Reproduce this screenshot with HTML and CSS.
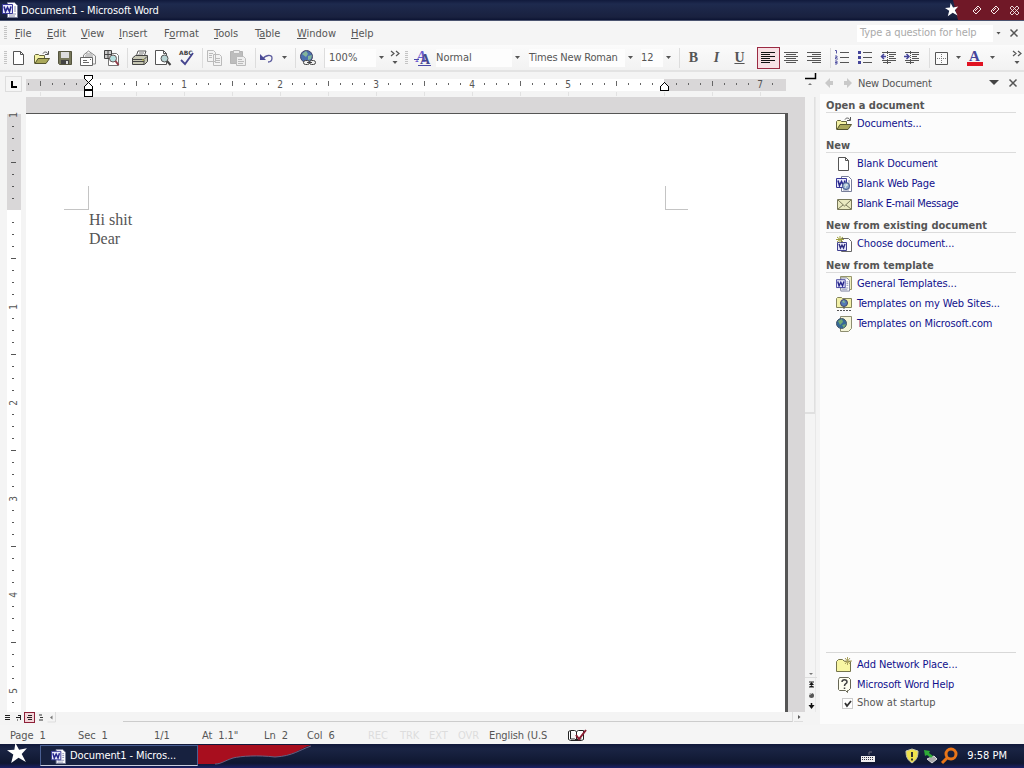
FILE: index.html
```html
<!DOCTYPE html>
<html lang="en">

	<head>
		<meta charset="UTF-8">
		<title>Document1 - Microsoft Word</title>
		<link rel="stylesheet" href="styles.css">
	</head>

	<body>
		<!-- shared icons -->
		<svg class="defs" width="0" height="0">
			<symbol id="word" viewBox="0 0 16 16">
				<path d="M5.500 .500h7l3 3v12h-10z" fill="#fff" stroke="#777d98" />
				<path d="M12 5h2M12 7h2M12 9h2M7 12h7M7 14h6" stroke="#8a8fb0" />
				<path d="M.500 2.500h10v9h-10z" fill="#e8e8fa" stroke="#37379a" />
				<path d="M2 4.500l1.500 5L5.500 5.500l2 4L9 4.500" fill="none" stroke="#26268c" stroke-width="1.600" />
			</symbol>
			<symbol id="blank" viewBox="0 0 16 16">
				<path d="M2.500 1.500h7l3 3v10h-10z" fill="#fff" stroke="#555" />
				<path d="M9.500 1.500v3h3" fill="none" stroke="#555" />
			</symbol>
			<symbol id="open" viewBox="0 0 16 16">
				<path d="M.500 13.500v-8l1-1h3l1 1h5v3" fill="#f4f2a5" stroke="#66663c" />
				<path d="M1 13.500l3-5h11.500l-3.500 5z" fill="#aaa85a" stroke="#55552f" />
				<path d="M9 3.500c1-2 4-2 5 .500M14.500 1v3.500H11" fill="none" stroke="#555" />
			</symbol>
			<symbol id="star" viewBox="0 0 20 20">
				<path d="M8 0l3.500 6.500L19 5l-5 5.500L18 18l-7-4-7 5 2-8-6-4 7-.500z" fill="#fff" />
			</symbol>
			<symbol id="close" viewBox="0 0 10 10">
				<path d="M1.500 1.500l7 7M8.500 1.500l-7 7" stroke="#555" stroke-width="1.500" />
			</symbol>
			<symbol id="more" viewBox="0 0 10 16">
				<path d="M1 1l3 2.500L1 6M6 1l3 2.500L6 6" fill="none" stroke="#555" stroke-width="1.200" />
				<path d="M2.500 11h5l-2.500 3z" fill="#555" />
			</symbol>
		</svg>

		<div class="title">
			<svg class="app" width="16" height="16"><use href="#word" /></svg>
			<span>Document1 - Microsoft Word</span>
			<div class="corner">
				<svg width="80" height="20">
					<path d="M9 0h71v20H14z" fill="#701827" />
					<use href="#star" x="1" y="3" width="14" height="14" />
					<g fill="none" stroke="#f5e8e8">
						<path d="M29 11l5-5 3 3-5 5zM31 11l3-3M47 11l5-5 3 3-5 5zM49 11l3-3" />
						<path d="M66 8l2-2 7 7-2 2zM73 6l2 2-7 7-2-2z" stroke-width=".900" />
					</g>
				</svg>
			</div>
		</div>

		<div class="menu">
			<i class="grip"></i>
			<ul>
				<li><u>F</u>ile</li>
				<li><u>E</u>dit</li>
				<li><u>V</u>iew</li>
				<li><u>I</u>nsert</li>
				<li>F<u>o</u>rmat</li>
				<li><u>T</u>ools</li>
				<li>T<u>a</u>ble</li>
				<li><u>W</u>indow</li>
				<li><u>H</u>elp</li>
			</ul>
			<div class="ask">Type a question for help</div>
			<i class="arrow"></i>
			<svg class="menu-close" width="10" height="10"><use href="#close" /></svg>
		</div>

		<div class="tools">
			<i class="grip"></i>
			<div class="standard">
				<svg class="btn" viewBox="0 0 23 22"><use href="#blank" x="4" y="3" width="16" height="16" /></svg>
				<svg class="btn" viewBox="0 0 23 22"><use href="#open" x="4" y="3" width="16" height="16" /></svg>
				<svg class="btn" viewBox="0 0 23 22">
					<path d="M5.500 4.500h13v13h-12l-1-1z" fill="#77775a" stroke="#55553f" />
					<path d="M8 5h8v6H8z" fill="#ddd" />
					<path d="M8 13h8v4H8z" fill="#444" />
					<path d="M13 14h2v3h-2z" fill="#ddd" />
				</svg>
				<svg class="btn" viewBox="0 0 23 22">
					<path d="M7.500 10V8l5-4 7 5v8h-3" fill="#f5f5f5" stroke="#888" />
					<path d="M9 9h8M10 7h6" stroke="#999" />
					<path d="M4.500 10.500h12v8h-12z" fill="#fff" stroke="#666" />
					<path d="M7 13.500h4M7 15.500h6M14 12.500h1" stroke="#666" />
				</svg>
				<svg class="btn" viewBox="0 0 23 22">
					<path d="M9.500 6.500h8l2 2v10h-10z" fill="#fff" stroke="#777" />
					<path d="M5.500 3.500h7v8h-7zM5 7.500h8M9 3v9" fill="#ccc" stroke="#444" />
					<circle cx="14" cy="11.500" r="3.500" fill="#b4dfdf" stroke="#655" />
					<path d="M16.500 14l3 4" stroke="#923c48" stroke-width="2" />
				</svg>
				<i class="sep"></i>
				<svg class="btn" viewBox="0 0 23 22">
					<path d="M8 10l2-6h8l-2 6z" fill="#fff" stroke="#555" />
					<path d="M11 6h5M10 8h5" stroke="#777" />
					<path d="M4.500 11l3-2.500h12v6l-3 3h-12z" fill="#c7c7b4" stroke="#444" />
					<path d="M4 12.500h12l3-3M5 14.500h11M16 13v4" fill="none" stroke="#444" />
					<path d="M14 13h2" stroke="#b7b738" />
				</svg>
				<svg class="btn" viewBox="0 0 23 22">
					<path d="M4.500 3.500h8l3 3v11h-11z" fill="#fff" stroke="#555" />
					<path d="M12.500 3.500v3h3" fill="none" stroke="#555" />
					<circle cx="13.500" cy="11.500" r="3.500" fill="#b9d4d4" stroke="#555" />
					<path d="M16 14l3.500 4" stroke="#444" stroke-width="2" />
				</svg>
				<svg class="btn" viewBox="0 0 23 22">
					<text class="abc" x="5" y="8">ABC</text>
					<path d="M7 13l4 4 8-11" fill="none" stroke="#45458f" stroke-width="1.800" />
				</svg>
				<i class="sep"></i>
				<svg class="btn" viewBox="0 0 23 22">
					<path d="M4.500 3.500h6l2 2v9h-8zM10.500 7.500h6l2 2v9h-8z" fill="#f3f3f3" stroke="#bbb" />
					<path d="M6 6.500h4M6 8.500h3M6 10.500h3M12 11.500h5M12 13.500h5M12 15.500h5" stroke="#bbb" />
				</svg>
				<svg class="btn" viewBox="0 0 23 22">
					<path d="M4.500 4.500h12v12h-12z" fill="#bdbdbd" stroke="#b4b4b4" />
					<path d="M7.500 3.500h6v3h-6z" fill="#eee" stroke="#bbb" />
					<path d="M10.500 9.500h7l2 2v7h-9zM12 12.500h4M12 14.500h6M12 16.500h5" fill="#eee" stroke="#bbb" />
				</svg>
				<i class="sep wide"></i>
				<svg class="btn" viewBox="0 0 23 22">
					<path d="M7 12c2-4 9-5 9-1 0 2-1 4-4 4" fill="none" stroke="#5a5a9c" stroke-width="1.300" />
					<path d="M4 7v6h6z" fill="#494995" />
				</svg>
				<i class="arrow"></i>
				<i class="sep"></i>
				<svg class="btn" viewBox="0 0 23 22">
					<circle cx="10.500" cy="9.500" r="6" fill="#4a6fae" stroke="#446" />
					<path d="M6 7l4-3 2 3-2 3zM12 9l4-1-1 4-3 1z" fill="#83b59a" />
					<rect x="7.500" y="13.500" width="6" height="4" rx="2" fill="#eee" stroke="#444" />
					<rect x="13.500" y="13.500" width="6" height="4" rx="2" fill="#eee" stroke="#444" />
					<path d="M11 15.500h5" stroke="#444" />
				</svg>
				<i class="sep"></i>
			</div>
			<div class="combo zoom">100%</div><i class="arrow"></i>
			<svg class="more" width="10" height="16"><use href="#more" /></svg>
			<i class="grip"></i>
			<svg class="btn styles" viewBox="0 0 23 22">
				<text class="back-a" x="5" y="15">A</text>
				<text class="front-a" x="9" y="17">A</text>
				<path d="M3 12.500h5M7 18.500h13" stroke="#4a4aa8" />
			</svg>
			<div class="combo style">Normal</div><i class="arrow"></i>
			<div class="combo face">Times New Roman</div><i class="arrow"></i>
			<div class="combo size">12</div><i class="arrow"></i>
			<i class="sep"></i>
			<div class="format">
				<b class="letter">B</b>
				<b class="letter it">I</b>
				<b class="letter un">U</b>
			</div>
			<svg class="btn on" viewBox="0 0 23 22"><path d="M4 5.500h14M4 7.500h9M4 9.500h14M4 11.500h9M4 13.500h14M4 15.500h9" stroke="#111" /></svg>
			<svg class="btn" viewBox="0 0 23 22"><path d="M4 5.500h14M6 7.500h10M4 9.500h14M6 11.500h10M4 13.500h14M6 15.500h10" stroke="#555" /></svg>
			<svg class="btn" viewBox="0 0 23 22"><path d="M4 5.500h14M9 7.500h9M4 9.500h14M9 11.500h9M4 13.500h14M9 15.500h9" stroke="#555" /></svg>
			<i class="sep list-sep"></i>
			<svg class="btn" viewBox="0 0 23 22">
				<path d="M9 5.500h9M9 10.500h9M9 15.500h9" stroke="#555" />
				<path d="M4 3.500h1.500v3M4 9h2v1.500H4.500V12H7M4 14h2v3H4M4 15.500h2" fill="none" stroke="#5757a5" />
			</svg>
			<svg class="btn" viewBox="0 0 23 22">
				<path d="M9 5.500h9M9 10.500h9M9 15.500h9" stroke="#555" />
				<path d="M4 4h3v3H4zM4 9h3v3H4zM4 14h3v3H4z" fill="#45459b" />
			</svg>
			<svg class="btn" viewBox="0 0 23 22">
				<path d="M5 5.500h14M12 7.500h7M12 9.500h5M12 11.500h7M5 13.500h14M6 15.500h8" stroke="#555" />
				<path d="M10.500 4v14" stroke="#555" stroke-dasharray="1 1" />
				<path d="M4 9.500h5M7 7l-2.500 2.500L7 12" fill="none" stroke="#45459b" stroke-width="1.500" />
			</svg>
			<svg class="btn" viewBox="0 0 23 22">
				<path d="M5 5.500h14M12 7.500h7M12 9.500h5M12 11.500h7M5 13.500h14M6 15.500h8" stroke="#555" />
				<path d="M10.500 4v14" stroke="#555" stroke-dasharray="1 1" />
				<path d="M4 9.500h5M6.500 7L9 9.500 6.500 12" fill="none" stroke="#45459b" stroke-width="1.500" />
			</svg>
			<i class="sep wide"></i>
			<svg class="btn" viewBox="0 0 23 22">
				<path d="M5.500 5.500h12v12h-12z" fill="#fbfbfb" stroke="#555" />
				<path d="M11.500 7v10M7 11.500h10" stroke="#777" stroke-dasharray="1 1" />
			</svg>
			<i class="arrow"></i>
			<svg class="btn" viewBox="0 0 23 22">
				<text class="fontcolor" x="5" y="14">A</text>
				<path d="M3 15h16v4H3z" fill="#e01222" />
			</svg>
			<i class="arrow"></i>
			<svg class="more last" width="10" height="16"><use href="#more" /></svg>
		</div>

		<div class="main">
			<div class="editor">
				<svg class="hruler" width="820" height="25">
					<defs>
						<pattern id="inch" x="88" y="0" width="96" height="25" patternUnits="userSpaceOnUse">
							<path d="M12.500 11v2M24.500 11v2M36.500 11v2M48.500 9v5M60.500 11v2M72.500 11v2M84.500 11v2" stroke="#666" />
							<path d="M48.500 20v4M.500 20v4" stroke="#e2e2e2" />
						</pattern>
					</defs>
					<rect x="5.500" y="4.500" width="16" height="15" fill="#f5f5f5" stroke="#ddd" />
					<path d="M12 9v6h5" fill="none" stroke="#000" stroke-width="2" />
					<path d="M26 7h62v12H26zM664 7h122v12H664z" fill="#d9d7d8" />
					<path d="M88 7h576v12H88z" fill="#fff" />
					<path d="M26 0h751v25H26z" fill="url(#inch)" />
					<g class="num">
						<text x="184" y="16">1</text>
						<text x="280" y="16">2</text>
						<text x="376" y="16">3</text>
						<text x="472" y="16">4</text>
						<text x="568" y="16">5</text>
						<text x="760" y="16">7</text>
					</g>
					<g fill="#fff" stroke="#000" shape-rendering="crispEdges">
						<path d="M84.500 3.500h8v3l-4 4-4-4zM88.500 10.500l4 4v3h-8v-3zM84.500 18.500h8v6h-8z" />
						<path d="M664.500 10.500l4 4v4h-8v-4z" />
					</g>
					<path d="M805 6.500h10.500V1" fill="none" stroke="#000" stroke-width="1.500" />
					<path d="M808 13h4l-2-2z" fill="#777" />
				</svg>
				<div class="work">
					<svg class="vruler" width="26" height="615">
						<defs>
							<pattern id="vinch" x="0" y="113" width="26" height="96" patternUnits="userSpaceOnUse">
								<path d="M12 12.500h2M12 24.500h2M12 36.500h2M11 48.500h5M12 60.500h2M12 72.500h2M12 84.500h2" stroke="#555" />
							</pattern>
						</defs>
						<path d="M7 17h14v96H7z" fill="#d9d7d8" />
						<path d="M7 113h14v502H7z" fill="#fff" />
						<path d="M0 19h26v596H0z" fill="url(#vinch)" />
						<g class="num">
							<text transform="translate(17 18) rotate(-90)">1</text>
							<text transform="translate(17 210) rotate(-90)">1</text>
							<text transform="translate(17 306) rotate(-90)">2</text>
							<text transform="translate(17 402) rotate(-90)">3</text>
							<text transform="translate(17 498) rotate(-90)">4</text>
							<text transform="translate(17 594) rotate(-90)">5</text>
						</g>
					</svg>
					<div class="desk">
						<div class="page">
							<div class="marks"><i class="left"></i><i class="right"></i></div>
							<p>Hi shit</p>
							<p>Dear</p>
						</div>
					</div>
					<div class="vscroll">
						<div class="thumb"></div>
						<svg width="12" height="40" viewBox="0 0 12 40">
							<path d="M4 1h4L6 3z" fill="#777" />
							<path d="M0 5.500h12" stroke="#ddd" />
							<path d="M4 10h5M4 15h5" stroke="#222" />
							<path d="M4 13l2.500-3L9 13zM4.500 15l2-2 2 2z" fill="#111" />
							<circle cx="6.500" cy="23.500" r="2.500" fill="#555" />
							<path d="M4 23l3-2" stroke="#ddd" />
							<path d="M6.500 31v4" stroke="#111" stroke-width="1.500" />
							<path d="M3.500 33h6l-3 4z" fill="#111" />
						</svg>
					</div>
				</div>
				<div class="hscroll">
					<svg width="62" height="13" viewBox="0 0 62 13">
						<path d="M5 3.500h5M5 5.500h5M5 7.500h5" stroke="#222" />
						<path d="M16 5.500h5M20.500 3v5M18 3.500h2M17 8h1" stroke="#222" />
						<rect x="24.500" y=".500" width="10" height="10" fill="#f3d5d9" stroke="#8d2038" />
						<path d="M28 3.500h4M27 5.500h5M28 7.500h4" stroke="#222" />
						<path d="M39 3h3M40 5.500h3M39 8h4" stroke="#333" />
						<path d="M50 5.500l2.500-2v4z" fill="#777" />
						<path d="M55.500 0v10h-8" fill="none" stroke="#ddd" />
					</svg>
					<div class="track"></div>
					<svg width="12" height="10"><path d="M5 3v4l2.500-2z" fill="#555" /><path d="M1 9.500h9" stroke="#ddd" /></svg>
				</div>
			</div>

			<div class="pane">
				<div class="pane-head">
					<svg width="30" height="12"><path d="M1 6l5-5v3h3v4H6v3zM28 6l-5-5v3h-3v4h3v3z" fill="#c9c9c9" /></svg>
					<span>New Document</span>
					<svg width="30" height="10">
						<path d="M1 2h10L6 7z" fill="#444" />
						<use href="#close" x="20" y="0" width="10" height="10" />
					</svg>
				</div>
				<h2>Open a document</h2>
				<a><svg viewBox="0 0 16 16"><use href="#open" /></svg>Documents...</a>
				<h2>New</h2>
				<a><svg viewBox="0 0 16 16"><use href="#blank" /></svg>Blank Document</a>
				<a><svg viewBox="0 0 16 16"><use href="#word" /><circle cx="10" cy="10" r="3.500" fill="#92add0" stroke="#445a8c" /><path d="M8 9h4M9 12l2-4" stroke="#e5f0e5" /></svg>Blank Web Page</a>
				<a class="mail"><svg viewBox="0 0 16 16"><path d="M1.500 3.500h14v10h-14z" fill="#e9e9c0" stroke="#777759" /><path d="M2 4l6.500 6L15 4M2 13l5-4M15 13l-5-4" fill="none" stroke="#777759" /></svg>Blank E-mail Message</a>
				<h2>New from existing document</h2>
				<a><svg viewBox="0 0 16 16"><path d="M5.500 2.500h7l3 3v10h-10z" fill="#fff" stroke="#666" /><path d="M1.500 6.500h9v8h-9z" fill="#e7e7f8" stroke="#404090" /><path d="M3 8l1.500 4L6 9l1.500 3L9 8" fill="none" stroke="#303080" stroke-width="1.400" /><path d="M4 0v7M0 3.500h8M1 1l6 5M7 1L1 6" stroke="#a0a03c" /></svg>Choose document...</a>
				<h2>New from template</h2>
				<a><svg viewBox="0 0 16 16"><path d="M4.500 .500h11v13h-11z" fill="#efefc0" stroke="#96966a" /><use href="#word" y="1" width="14" height="15" /></svg>General Templates...</a>
				<a><svg viewBox="0 0 16 16"><path d="M.500 2.500l1-1h4l1 1h9v9H.500z" fill="#f2f0a8" stroke="#85855b" /><circle cx="8" cy="7" r="3.500" fill="#557bb6" stroke="#446" /><path d="M6 6l2-2 1 3z" fill="#8fc08a" /><path d="M8 11v4M1 14.500h14" stroke="#555" stroke-dasharray="2 1" /></svg>Templates on my Web Sites...</a>
				<a><svg viewBox="0 0 16 16"><path d="M4.500 .500h11v12l-3 3h-8z" fill="#f5f5d9" stroke="#8d8d70" /><circle cx="5.500" cy="7.500" r="5" fill="#356998" stroke="#456" /><path d="M2 5l4-2 1 3-3 3zM6 9l4-1-2 4z" fill="#74aa70" /></svg>Templates on Microsoft.com</a>
				<div class="pane-foot">
					<a><svg viewBox="0 0 16 16"><path d="M.500 14.500v-10l2-2h4l2 2h6v10z" fill="#f8f6a3" stroke="#74744b" /><path d="M11.500 0v8M8 4h8M9 1l5 6M14 1L9 7" stroke="#aaa25e" /></svg>Add Network Place...</a>
					<a><svg viewBox="0 0 16 16"><path d="M3.500 .500h9l2 2v9l-2 2h-1v2l-2-2h-6l-1-1v-10z" fill="#fffff0" stroke="#666655" /><path d="M6 5c0-3 5-3 5 0 0 2-2.500 1.500-2.500 4M8.500 10.500v1.500" fill="none" stroke="#444" stroke-width="1.500" /></svg>Microsoft Word Help</a>
					<label><i class="check"><svg width="8" height="8"><path d="M1 3l2 3 4-5" fill="none" stroke="#333" stroke-width="1.800" /></svg></i>Show at startup</label>
				</div>
			</div>
		</div>

		<div class="status">
			<span>Page&nbsp; 1</span>
			<span>Sec&nbsp; 1</span>
			<span>1/1</span>
			<span>At&nbsp; 1.1"</span>
			<span>Ln&nbsp; 2</span>
			<span>Col&nbsp; 6</span>
			<span class="off">REC</span>
			<span class="off">TRK</span>
			<span class="off">EXT</span>
			<span class="off">OVR</span>
			<span>English (U.S</span>
			<svg width="19" height="14">
				<path d="M.500 2.500l2-1h4l2 1 2-1h5v9l-2 1h-11l-2-1zM2.500 2v8h4l2 1 2-1h3M8.500 3v8" fill="#fff" stroke="#222" />
				<path d="M8 6l3 4 7-9" fill="none" stroke="#8a1f32" stroke-width="2" />
			</svg>
		</div>

		<div class="taskbar">
			<svg class="start" width="40" height="24"><use href="#star" x="7" y="-1" width="21" height="21" /></svg>
			<div class="task">
				<svg width="15" height="15"><use href="#word" /></svg>
				<span>Document1 - Micros...</span>
			</div>
			<svg class="wave" width="120" height="24">
				<path d="M0 1h113C101 5 95 12 77 13 60 11 43 12 35 14c-9 3-12 6-18 6H0z" fill="#a80e1e" />
				<path d="M113 2C101 6 95 12 77 13 60 11 43 12 35 14c-9 3-12 6-18 6" fill="none" stroke="#696080" />
			</svg>
			<div class="tray">
				<svg width="98" height="22">
					<path d="M1 11h14v6H1z" fill="#eee" />
					<path d="M2 12.500h12M2 14.500h12" stroke="#334" stroke-dasharray="1 1" />
					<path d="M9 10V7h3" fill="none" stroke="#667" />
					<path d="M52 4l6 2c0 7-2 9-6 12-4-3-6-5-6-12z" fill="#efe24c" stroke="#c8c8b0" />
					<path d="M52 7v5M52 13.500v2" stroke="#333" stroke-width="2" />
					<path d="M67 14l7-3 3 3-5 4z" fill="#aaa" stroke="#ddd" />
					<path d="M64 5l6 1-1 2 4 3-2 2-4-3-2 1z" fill="#2faa37" />
					<circle cx="91" cy="9" r="5" fill="none" stroke="#e87518" stroke-width="3" />
					<path d="M87 13l-5 5" stroke="#e87518" stroke-width="3" />
				</svg>
				<span>9:58 PM</span>
			</div>
		</div>
	</body>

</html>
```
FILE: styles.css
```css
* {
	margin: 0;
	padding: 0;
	box-sizing: border-box;
}

body {
	width: 1024px;
	height: 768px;
	overflow: hidden;
	display: flex;
	flex-direction: column;
	font: 11px/14px "DejaVu Sans Condensed", "DejaVu Sans", sans-serif;
	font-stretch: condensed;
	color: #555;
	background: #f4f4f4;
	white-space: nowrap;
}

ul {
	list-style: none;
}

svg {
	display: block;
	flex: none;
}

.defs {
	position: absolute;
}

/* title bar */
.title {
	height: 21px;
	flex: none;
	display: flex;
	align-items: center;
	color: #fff;
	letter-spacing: -.12px;
	background: linear-gradient(#111a3c, #1e2a4e 20%, #19213f 85%, #0c1433);
	border-bottom: 1px solid #4b5470;
}

.title .app {
	margin: 0 3px 0 2px;
}

.title span {
	padding-top: 2px;
}

.corner {
	margin-left: auto;
}

/* menu bar */
.menu {
	height: 24px;
	flex: none;
	display: flex;
	align-items: center;
	background: #f5f5f5;
}

.grip {
	width: 3px;
	height: 14px;
	margin-left: 4px;
	flex: none;
	background: repeating-linear-gradient(#c4c4c4 0 1px, #f5f5f5 1px 2px);
}

.menu ul {
	margin-left: 8px;
	padding-top: 2px;
	display: grid;
	grid-template-columns: 32px 34px 38px 45px 50px 41px 42px 54px 40px;
}

.ask {
	margin-left: auto;
	width: 136px;
	height: 17px;
	padding-left: 3px;
	line-height: 16px;
	letter-spacing: -.1px;
	color: #aaa;
	background: #fff;
}

.arrow {
	width: 11px;
	height: 3px;
	flex: none;
	background: #555;
	clip-path: polygon(3px 0, 8px 0, 5.5px 3px);
}

.menu-close {
	margin: 0 5px 0 5px;
}

/* toolbars */
.tools {
	height: 27px;
	flex: none;
	display: flex;
	align-items: center;
	background: linear-gradient(#fbfbfb, #f2f2f2);
	border-bottom: 2px solid #e3e3e3;
}

.standard {
	display: flex;
	align-items: center;
}

.btn {
	width: 23px;
	height: 22px;
}

.btn.on {
	background: #f7e0e4;
	outline: 1px solid #9b2a42;
	outline-offset: -1px;
}

.sep {
	width: 6px;
	height: 20px;
	flex: none;
	border-right: 1px solid #ddd;
}

.sep.wide {
	width: 7px;
}

.abc {
	font: bold 6px "DejaVu Sans", sans-serif;
	fill: #444;
}

.fontcolor {
	font: bold 15px "Liberation Serif", serif;
	fill: #45459b;
}

.back-a {
	font: italic bold 16px "Liberation Serif", serif;
	fill: #6a5cd0;
}

.front-a {
	font: bold 14px "Liberation Serif", serif;
	fill: #454a8c;
}

.combo {
	height: 18px;
	line-height: 17px;
	flex: none;
	background: #fdfdfd;
}

.zoom {
	width: 51px;
	padding-left: 4px;
}

.style {
	width: 76px;
}

.face {
	width: 96px;
	margin-left: 6px;
	letter-spacing: -.2px;
}

.size {
	width: 22px;
	margin-left: 5px;
}

.more {
	margin: 0 1px 0 3px;
}

.more.last {
	margin: 0 2px 0 auto;
}

.styles {
	margin: 0 2px 0 3px;
}

.format {
	display: flex;
	width: 77px;
	padding-left: 2px;
}

.letter {
	width: 23px;
	text-align: center;
	font: bold 14px/16px "Liberation Serif", serif;
}

.it {
	font-style: italic;
}

.un {
	text-decoration: underline;
}

.list-sep {
	width: 5px;
}

/* editor */
.main {
	flex: 1;
	min-height: 0;
	display: flex;
}

.editor {
	width: 820px;
	display: flex;
	flex-direction: column;
}

.num {
	font: 10px "DejaVu Sans Condensed", "DejaVu Sans", sans-serif;
	fill: #555;
	text-anchor: middle;
}

.work {
	height: 615px;
	display: flex;
}

.desk {
	width: 779px;
	padding-top: 16px;
	background: #d9d7d8;
}

.page {
	width: 762px;
	height: 599px;
	padding-top: 72px;
	background: #fff;
	border-top: 1px solid #555;
	border-right: 3px solid #555;
}

.marks {
	display: flex;
	justify-content: space-between;
	width: 624px;
	height: 24px;
	margin: 0 0 0 38px;
}

.marks i {
	width: 25px;
	border-bottom: 1px solid #c4c4c4;
}

.marks .left {
	border-right: 1px solid #c4c4c4;
}

.marks .right {
	width: 23px;
	border-left: 1px solid #c4c4c4;
}

.page p {
	margin-left: 63px;
	font: 16px/19px "Liberation Serif", serif;
}

.vscroll {
	width: 11px;
	display: flex;
	flex-direction: column;
	justify-content: space-between;
	border-right: 1px solid #e8e8e8;
}

.thumb {
	height: 317px;
	border: 2px solid #e0e0e0;
	border-width: 0 1px 2px 0;
}

.hscroll {
	height: 13px;
	display: flex;
}

.track {
	width: 670px;
	height: 10px;
	margin-left: 61px;
	border-bottom: 1px solid #ccc;
	border-right: 1px solid #ddd;
}

/* task pane */
.pane {
	width: 204px;
	height: 652px;
	padding: 0 8px 0 6px;
	display: flex;
	flex-direction: column;
	background: #fcfcfc;
}

.pane-head {
	height: 22px;
	margin: 0 -8px 2px -6px;
	padding: 0 6px 0 4px;
	display: flex;
	align-items: center;
	gap: 4px;
	background: #f5f5f5;
}

.pane-head span {
	flex: 1;
	padding-top: 1px;
	letter-spacing: -.2px;
}

.pane h2 {
	height: 20px;
	padding-top: 2px;
	font-size: 11px;
	line-height: 15px;
	background: linear-gradient(#dcdcdc, #dcdcdc) 0 16px / 100% 1px no-repeat;
}

.pane a {
	height: 20px;
	padding: 0 0 4px 10px;
	display: flex;
	align-items: center;
	gap: 5px;
	letter-spacing: -.1px;
	color: #10108c;
}

.pane .mail {
	letter-spacing: -.35px;
}

.pane a svg {
	width: 16px;
	height: 16px;
}

.pane-foot {
	margin-top: auto;
	height: 72px;
	padding-top: 2px;
	border-top: 1px solid #d8d8d8;
}

.pane-foot a {
	padding-bottom: 0;
}

.pane label {
	height: 16px;
	padding-left: 16px;
	display: flex;
	align-items: center;
	gap: 4px;
}

.check {
	width: 11px;
	height: 11px;
	padding: 1px;
	border: 1px solid #ccc;
	background: #fff;
}

/* status bar */
.status {
	height: 19px;
	flex: none;
	padding: 2px 0 0 10px;
	display: grid;
	grid-template-columns: 68px 76px 48px 62px 43px 61px 32px 29px 29px 31px 79px 20px;
	align-items: center;
	letter-spacing: -.1px;
	background: #f5f5f5;
}

.off {
	color: #ddd;
}

/* taskbar */
.taskbar {
	height: 24px;
	flex: none;
	display: flex;
	color: #fff;
	background: linear-gradient(#10183a, #1a2444 20%, #0f1730 80%, #1b2166);
}

.task {
	width: 158px;
	height: 21px;
	margin-top: 1px;
	padding: 1px 0 0 10px;
	display: flex;
	align-items: center;
	gap: 4px;
	letter-spacing: -.12px;
	background: #17213f;
	border: 1px solid #4a5f92;
	border-bottom-color: #c8cddd;
}

.tray {
	margin-left: auto;
	display: flex;
	align-items: center;
	gap: 9px;
	padding-right: 17px;
}
```
